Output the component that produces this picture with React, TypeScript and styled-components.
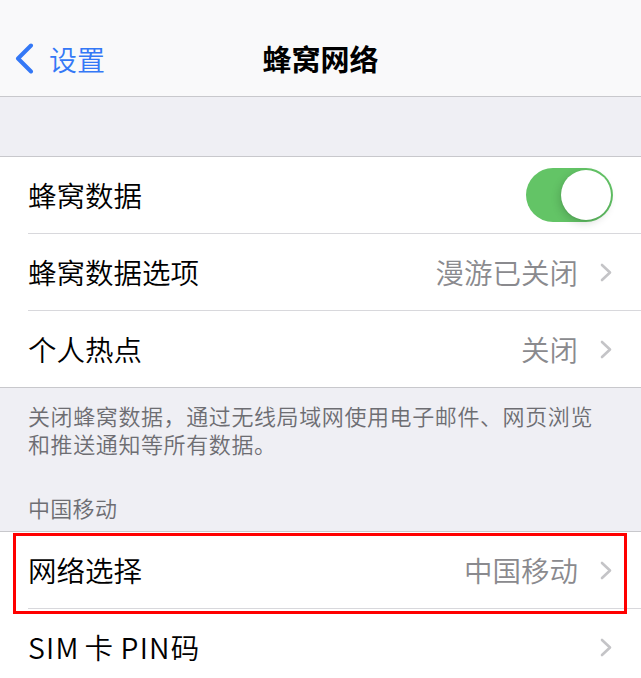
import React from 'react';
import styled, { createGlobalStyle } from 'styled-components';

const GlobalStyle = createGlobalStyle`
  html, body {
    margin: 0;
    padding: 0;
    background: #efeff4;
    overflow: hidden;
  }
  body {
    font-family: "Noto Sans CJK SC", "Noto Sans", sans-serif;
    -webkit-font-smoothing: antialiased;
  }
`;

const Page = styled.div`
  width: 641px;
  min-height: 678px;
  background: #efeff4;
`;

const NavBar = styled.header`
  height: 75px;
  padding-top: 21px;
  background: #f9f9fa;
  border-bottom: 1px solid #c8c8cc;
  display: grid;
  grid-template-columns: 1fr auto 1fr;
  align-items: center;
`;

const BackButton = styled.div`
  display: flex;
  align-items: center;
  gap: 15px;
  padding-left: 15px;
  color: #3478f6;
  font-size: 28px;
  font-weight: 350;
  line-height: 1;
`;

const NavTitle = styled.h1`
  margin: 0;
  font-size: 29px;
  font-weight: 600;
  color: #000;
  line-height: 1;
`;

const Spacer = styled.div<{ $height: number }>`
  height: ${(p) => p.$height}px;
`;

const Group = styled.section`
  background: #fff;
  border-top: 1px solid #c8c8cc;
  border-bottom: 1px solid #c8c8cc;
`;

const Row = styled.div<{ $last?: boolean }>`
  position: relative;
  height: 76px;
  margin-left: 28px;
  padding-right: 29px;
  display: flex;
  align-items: center;
  border-bottom: ${(p) => (p.$last ? 'none' : '1px solid #d8d8dc')};
`;

const Label = styled.span`
  flex: 1;
  font-size: 28.5px;
  font-weight: 350;
  color: #000;
  line-height: 1;
`;

const Latin = styled.span<{ $gap: number }>`
  letter-spacing: 1.2px;
  margin-right: ${(p) => p.$gap}px;
`;

const Value = styled.span`
  font-size: 28.5px;
  font-weight: 350;
  color: #8a8a8e;
  line-height: 1;
  margin-right: 22px;
`;

const Footer = styled.p`
  margin: 0;
  padding: 13px 28px 0;
  font-size: 22px;
  font-weight: 350;
  letter-spacing: 0.6px;
  line-height: 28px;
  color: #6d6d72;
`;

const SectionHeader = styled.h2`
  margin: 37px 0 0;
  padding: 0 28px 10px;
  font-size: 22px;
  font-weight: 350;
  letter-spacing: 0.3px;
  line-height: 27px;
  color: #6d6d72;
`;

const Track = styled.div<{ $on: boolean }>`
  position: relative;
  width: 87px;
  height: 54px;
  border-radius: 27px;
  background: ${(p) => (p.$on ? '#63c466' : '#e9e9eb')};
  margin-right: -1px;
`;

const Knob = styled.div<{ $on: boolean }>`
  position: absolute;
  top: 2px;
  left: ${(p) => (p.$on ? '35px' : '2px')};
  width: 50px;
  height: 50px;
  border-radius: 50%;
  background: #fff;
  box-shadow: -2px 3px 8px rgba(0, 0, 0, 0.15), 0 1px 2px rgba(0, 0, 0, 0.08);
`;

const Highlight = styled.div`
  position: absolute;
  top: 1px;
  left: -15px;
  right: 14px;
  bottom: -6px;
  border: 3px solid #ff0000;
  pointer-events: none;
`;

function Chevron() {
  return (
    <svg width="12" height="19" viewBox="0 0 12 19" fill="none">
      <path
        d="M2 2 L10 9.5 L2 17"
        stroke="#c4c4c7"
        strokeWidth="2.6"
        strokeLinecap="round"
        strokeLinejoin="round"
      />
    </svg>
  );
}

function BackChevron() {
  return (
    <svg width="19" height="31" viewBox="0 0 19 31" fill="none">
      <path
        d="M16 2.5 L3 15.5 L16 28.5"
        stroke="#3478f6"
        strokeWidth="4"
        strokeLinecap="round"
        strokeLinejoin="round"
      />
    </svg>
  );
}

function Toggle({ on }: { on: boolean }) {
  return (
    <Track $on={on}>
      <Knob $on={on} />
    </Track>
  );
}

export default function App() {
  return (
    <Page>
      <GlobalStyle />
      <NavBar>
        <BackButton>
          <BackChevron />
          设置
        </BackButton>
        <NavTitle>蜂窝网络</NavTitle>
        <div />
      </NavBar>

      <Spacer $height={59} />

      <Group>
        <Row>
          <Label>蜂窝数据</Label>
          <Toggle on />
        </Row>
        <Row>
          <Label>蜂窝数据选项</Label>
          <Value>漫游已关闭</Value>
          <Chevron />
        </Row>
        <Row $last>
          <Label>个人热点</Label>
          <Value>关闭</Value>
          <Chevron />
        </Row>
      </Group>

      <Footer>
        关闭蜂窝数据，通过无线局域网使用电子邮件、网页浏览
        <br />
        和推送通知等所有数据。
      </Footer>

      <SectionHeader>中国移动</SectionHeader>

      <Group>
        <Row>
          <Label>网络选择</Label>
          <Value>中国移动</Value>
          <Chevron />
          <Highlight />
        </Row>
        <Row $last>
          <Label>
            <Latin $gap={5}>SIM</Latin>卡<Latin $gap={0}> PIN</Latin>码
          </Label>
          <Chevron />
        </Row>
      </Group>
    </Page>
  );
}
